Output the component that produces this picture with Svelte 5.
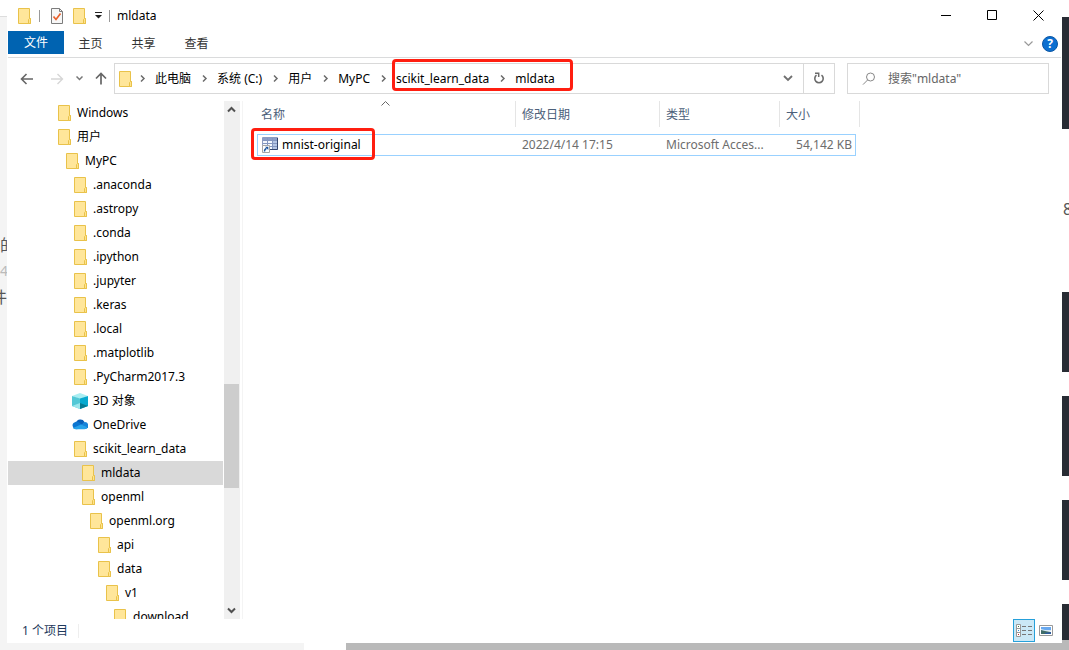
<script lang="ts">
  type IconKind = 'folder' | 'cube' | 'cloud';

  interface TreeItem {
    name: string;
    level: number;
    icon?: IconKind;
  }

  const tree: TreeItem[] = [
    { name: 'Windows', level: 0 },
    { name: '用户', level: 0 },
    { name: 'MyPC', level: 1 },
    { name: '.anaconda', level: 2 },
    { name: '.astropy', level: 2 },
    { name: '.conda', level: 2 },
    { name: '.ipython', level: 2 },
    { name: '.jupyter', level: 2 },
    { name: '.keras', level: 2 },
    { name: '.local', level: 2 },
    { name: '.matplotlib', level: 2 },
    { name: '.PyCharm2017.3', level: 2 },
    { name: '3D 对象', level: 2, icon: 'cube' },
    { name: 'OneDrive', level: 2, icon: 'cloud' },
    { name: 'scikit_learn_data', level: 2 },
    { name: 'mldata', level: 3 },
    { name: 'openml', level: 3 },
    { name: 'openml.org', level: 4 },
    { name: 'api', level: 5 },
    { name: 'data', level: 5 },
    { name: 'v1', level: 6 },
    { name: 'download', level: 7 },
  ];

  const tabs = ['主页', '共享', '查看'];
  const path = ['此电脑', '系统 (C:)', '用户', 'MyPC'];
  const marked = ['scikit_learn_data', 'mldata'];

  let selected = $state('mldata');
  let query = $state('');
</script>

{#snippet folder()}
  <svg class="icon" width="16" height="16" viewBox="0 0 16 16" aria-hidden="true">
    <path d="M2.500 .5h11v10h1v5h-12z" fill="#ffe69a" stroke="#e9c24a" />
    <path d="M12.500 15.500v-4l1-1h1v5z" fill="#ffe38c" stroke="#e9c24a" />
  </svg>
{/snippet}

{#snippet chevron()}
  <svg class="sep" width="26" height="9" viewBox="0 0 26 9" aria-hidden="true">
    <path d="M12 1.500l3 3-3 3" fill="none" stroke="#6b6b6b" stroke-width="1.500" />
  </svg>
{/snippet}

<div class="desktop">
  <div class="behind-left">
    <div class="behind-text">
      <span>的</span>
      <span class="dim">40</span>
      <span class="end">件</span>
    </div>
  </div>

  <main class="window">
    <header class="titlebar">
      <div class="quick">
        {@render folder()}
        <i class="bar first"></i>
        <button class="plain" aria-label="属性">
          <svg class="icon" width="16" height="16" viewBox="0 0 16 16" aria-hidden="true">
            <path d="M2.500 .5h8l3 3v12h-11z" fill="#f7f7f7" stroke="#7c7c7c" />
            <path d="M10.500 .5v3h3" fill="none" stroke="#7c7c7c" />
            <path d="M4.500 8.500l2.500 3 4.500-6" fill="none" stroke="#e8602c" stroke-width="1.700" />
          </svg>
        </button>
        <button class="plain new" aria-label="新建文件夹">{@render folder()}</button>
        <button class="plain more" aria-label="自定义快速访问工具栏">
          <svg width="7" height="7" viewBox="0 0 7 7" aria-hidden="true">
            <path d="M0 0h7v1H0zM0 3h7L3.500 6.500z" fill="#222" />
          </svg>
        </button>
        <i class="bar"></i>
      </div>
      <h1>mldata</h1>
      <div class="controls">
        <button aria-label="最小化">
          <svg width="11" height="11" viewBox="0 0 11 11"><path d="M0 5.500h10" stroke="#000" /></svg>
        </button>
        <button aria-label="最大化">
          <svg width="11" height="11" viewBox="0 0 11 11"><path d="M.5 .5h9v9h-9z" fill="none" stroke="#000" /></svg>
        </button>
        <button aria-label="关闭">
          <svg width="11" height="11" viewBox="0 0 11 11"><path d="M.5 .5l10 10M10.500 .5l-10 10" stroke="#000" /></svg>
        </button>
      </div>
    </header>

    <div class="ribbon">
      <button class="file">文件</button>
      {#each tabs as tab}
        <button class="tab">{tab}</button>
      {/each}
      <div class="ribbon-end">
        <button class="plain" aria-label="展开功能区">
          <svg width="9" height="6" viewBox="0 0 9 6"><path d="M.5 .5l4 4 4-4" fill="none" stroke="#999" stroke-width="1.200" /></svg>
        </button>
        <button class="help" aria-label="帮助">?</button>
      </div>
    </div>

    <div class="address-row">
      <div class="history">
        <button class="plain" aria-label="后退">
          <svg width="14" height="12" viewBox="0 0 14 12"><path d="M13 6H2M6.500 1L1.500 6l5 5" fill="none" stroke="#666" stroke-width="1.600" /></svg>
        </button>
        <button class="plain" aria-label="前进">
          <svg width="14" height="12" viewBox="0 0 14 12"><path d="M1 6h11M7.500 1l5 5-5 5" fill="none" stroke="#d6d6d6" stroke-width="1.400" /></svg>
        </button>
        <button class="plain" aria-label="最近浏览的位置">
          <svg width="7" height="5" viewBox="0 0 7 5"><path d="M.5 .5l3 3 3-3" fill="none" stroke="#777" stroke-width="1.500" /></svg>
        </button>
        <button class="plain" aria-label="上移">
          <svg width="12" height="13" viewBox="0 0 12 13"><path d="M6 12.500V2M1 6.500l5-5 5 5" fill="none" stroke="#666" stroke-width="1.700" /></svg>
        </button>
      </div>
      <div class="address">
        <nav class="crumbs" aria-label="路径">
          {@render folder()}
          {#each path as part}
            {@render chevron()}
            <a href="#{part}">{part}</a>
          {/each}
          {@render chevron()}
          <span class="marked">
            <a href="#{marked[0]}">{marked[0]}</a>
            {@render chevron()}
            <a href="#{marked[1]}">{marked[1]}</a>
          </span>
        </nav>
        <button class="plain drop" aria-label="以前的位置">
          <svg width="10" height="7" viewBox="0 0 10 7"><path d="M1 1l4 4 4-4" fill="none" stroke="#707070" stroke-width="1.800" /></svg>
        </button>
        <button class="plain refresh" aria-label="刷新">
          <svg width="12" height="13" viewBox="0 0 12 13">
            <path d="M8.500 3.200A4.200 4.200 0 1 1 3.500 3.200" fill="none" stroke="#6b6b6b" stroke-width="1.600" />
            <path d="M2 1.300h3.700V5" fill="none" stroke="#6b6b6b" stroke-width="1.500" />
          </svg>
        </button>
      </div>
      <label class="search">
        <svg width="14" height="14" viewBox="0 0 14 14" aria-hidden="true">
          <circle cx="8.500" cy="5" r="4" fill="none" stroke="#888" />
          <path d="M5.700 7.900L1 12.600" stroke="#888" />
        </svg>
        <input type="text" placeholder={'搜索"mldata"'} aria-label="搜索" bind:value={query} />
      </label>
    </div>

    <div class="body">
      <nav class="tree" aria-label="导航窗格">
        <ul>
          {#each tree as item}
            <li>
              <button
                class="node"
                class:selected={item.name === selected}
                style="padding-left: {48 + item.level * 8}px"
                onclick={() => (selected = item.name)}
              >
                {#if item.icon === 'cube'}
                  <svg class="icon" width="16" height="16" viewBox="0 0 16 16" aria-hidden="true">
                    <path d="M0 3l8-3 8 3-8 3z" fill="#a9eef2" />
                    <path d="M0 3l8 2.500V16l-8-3z" fill="#52c8d6" />
                    <path d="M16 3L8 5.500V16l8-3z" fill="#06a9cf" />
                    <path d="M0 13l8-3v6z" fill="#9be6ec" />
                    <path d="M16 13l-8-3v6z" fill="#067a92" />
                  </svg>
                {:else if item.icon === 'cloud'}
                  <svg class="icon" width="16" height="16" viewBox="0 0 16 16" aria-hidden="true">
                    <path d="M4 6a4.600 4.600 0 0 1 8.500-1l-3 4z" fill="#0a5fb8" />
                    <path d="M3.500 12A3.500 3.500 0 0 1 3 5.200c2-.8 4 0 5 1l4 3-7 3z" fill="#0c76d1" />
                    <path d="M12.500 5A3.500 3.500 0 0 1 13 12L9 8z" fill="#1683d9" />
                    <path d="M3.500 12.200c-1.200 0-2-.5-2.500-1.200L9 7.500l6.300 2.800c-.6 1.200-1.400 1.900-2.800 1.900z" fill="#28a3ea" />
                  </svg>
                {:else}
                  {@render folder()}
                {/if}
                <span>{item.name}</span>
              </button>
            </li>
          {/each}
        </ul>
      </nav>

      <div class="scrollbar">
        <button class="plain" aria-label="向上滚动">
          <svg width="9" height="7" viewBox="0 0 9 7"><path d="M1 5.500L4.500 2 8 5.500" fill="none" stroke="#505050" stroke-width="2" /></svg>
        </button>
        <i class="before"></i>
        <i class="thumb"></i>
        <i class="after"></i>
        <button class="plain" aria-label="向下滚动">
          <svg width="9" height="7" viewBox="0 0 9 7"><path d="M1 1.500L4.500 5 8 1.500" fill="none" stroke="#505050" stroke-width="2" /></svg>
        </button>
      </div>

      <section class="files">
        <table>
          <colgroup>
            <col class="c-name" />
            <col class="c-date" />
            <col class="c-type" />
            <col class="c-size" />
          </colgroup>
          <thead>
            <tr>
              <th>
                <div>
                  名称
                  <svg class="sorted" width="9" height="5" viewBox="0 0 9 5" aria-hidden="true"><path d="M.5 4.500l4-4 4 4" fill="none" stroke="#666" /></svg>
                </div>
              </th>
              <th><div>修改日期</div></th>
              <th><div>类型</div></th>
              <th><div>大小</div></th>
            </tr>
          </thead>
          <tbody>
            <tr>
              <td>
                <div class="file-name">
                  <svg class="icon" width="16" height="16" viewBox="0 0 16 16" aria-hidden="true">
                    <path d="M.5 .5h15v12H.5z" fill="#f3f7fd" stroke="#8d9dc2" />
                    <path d="M1 1h14v2H1z" fill="#8b9dc8" />
                    <path d="M11 3h4v9h-4z" fill="#b4c5e5" />
                    <path d="M1 3.500h14M1 6.500h14M1 9.500h14M5.500 1v11M10.500 1v11" stroke="#8496bf" />
                    <path d="M15.500 1v11.500H8" fill="none" stroke="#34466f" />
                    <path d="M.5 8.500h7v7h-7z" fill="#fff" stroke="#a5a5a5" />
                    <path d="M2.500 14.500c0-2 .6-2.700 2-3" fill="none" stroke="#1c559e" stroke-width="1.400" />
                    <path d="M3 9.800h3.300v3.300z" fill="#1c559e" />
                  </svg>
                  <span>mnist-original</span>
                </div>
              </td>
              <td>2022/4/14 17:15</td>
              <td>Microsoft Acces...</td>
              <td class="size">54,142 KB</td>
            </tr>
          </tbody>
        </table>
      </section>
    </div>

    <footer class="status">
      <span class="count">1 个项目</span>
      <div class="views">
        <button class="view active" aria-label="详细信息">
          <svg width="16" height="14" viewBox="0 0 16 14">
            <path d="M.5 .5h4v12h-4zM.5 4.500h4M.5 8.500h4" fill="#fff" stroke="#999" />
            <path d="M2 2h1v1H2z" fill="#3c7a3c" />
            <path d="M2 6h1v1H2z" fill="#2a8ad4" />
            <path d="M2 10h1v1H2z" fill="#c22" />
            <path d="M6 2.500h4M12 2.500h4M6 6.500h4M12 6.500h4M6 10.500h4M12 10.500h4" stroke="#777" />
          </svg>
        </button>
        <button class="view" aria-label="大缩略图">
          <svg width="14" height="11" viewBox="0 0 14 11">
            <path d="M.5 .5h13v10H.5z" fill="#fff" stroke="#999" />
            <path d="M2 2h10v3H2z" fill="#68a8ef" />
            <path d="M2 4l4 1 6 0v1H2z" fill="#d5e8f5" />
            <path d="M2 5l4 1 6 1v2H2z" fill="#3f6c69" />
            <path d="M6 8l6-1v2H6z" fill="#2e5c9e" />
          </svg>
        </button>
      </div>
    </footer>
  </main>

  <div class="behind-right">
    <i class="block b1"></i>
    <span class="digit">8</span>
    <i class="block b2"></i>
    <i class="block b3"></i>
    <i class="block b4"></i>
    <i class="block b5"></i>
  </div>
  <div class="behind-bottom"><i></i></div>
</div>

<style>
  :global(body) {
    background: #fff;
  }
  .desktop {
    display: grid;
    grid-template-columns: 7px minmax(0, 1fr) 7px;
    grid-template-rows: minmax(0, 1fr) 7px;
    height: 100vh;
    overflow: hidden;
    font-family: 'Noto Sans', 'Noto Sans CJK SC', sans-serif;
    font-size: 12px;
    line-height: 16px;
    color: #000;
  }
  button,
  input {
    font: inherit;
    color: inherit;
    margin: 0;
    padding: 0;
    border: 0;
    background: none;
  }
  a {
    color: inherit;
    text-decoration: none;
    white-space: nowrap;
  }
  svg {
    display: block;
    flex: none;
  }
  .plain {
    display: flex;
    align-items: center;
    justify-content: center;
  }

  /* page showing around the window */
  .behind-left {
    margin-top: 16px;
    border-top: 1px solid #ddd;
    background: #f4f4f4;
    overflow: hidden;
  }
  .behind-text {
    display: flex;
    flex-direction: column;
    padding-top: 215px;
    font-size: 16px;
    line-height: 26px;
    color: #555;
  }
  .behind-text .dim {
    font-size: 14px;
    color: #bbb;
  }
  .behind-text .end {
    align-self: flex-end;
  }
  .behind-right {
    display: flex;
    flex-direction: column;
    padding-top: 17px;
    overflow: hidden;
  }
  .block {
    flex: none;
    height: 80px;
    margin-bottom: 24px;
    background: #282c34;
  }
  .b1 {
    height: 112px;
    margin-bottom: 0;
  }
  .b5 {
    height: 36px;
    margin-bottom: 0;
    border-bottom: 3px solid #b9b9b9;
  }
  .digit {
    flex: none;
    height: 163px;
    box-sizing: border-box;
    padding: 68px 0 0 1px;
    font-size: 16px;
    line-height: 24px;
    color: #555;
  }
  .behind-bottom {
    grid-column: 1 / -1;
    display: flex;
    background: linear-gradient(to right, #f4f4f4 304px, #fff 304px);
  }
  .behind-bottom i {
    flex: 1;
    margin-left: 346px;
    background: #b9b9b9;
  }

  .window {
    display: flex;
    flex-direction: column;
    padding: 0 1px;
    background: #fff;
    min-width: 0;
  }

  .titlebar {
    display: flex;
    height: 31px;
  }
  .quick {
    display: flex;
    align-items: center;
    padding-left: 8px;
  }
  .bar {
    width: 1px;
    height: 12px;
    background: #999;
  }
  .bar.first {
    margin: 0 9px 0 7px;
  }
  .new {
    margin-left: 6px;
  }
  .more {
    width: 22px;
  }
  h1 {
    margin: 0;
    padding-left: 7px;
    font-size: 12px;
    font-weight: 400;
    line-height: 31px;
  }
  .controls {
    display: flex;
    margin-left: auto;
  }
  .controls button {
    display: flex;
    align-items: center;
    justify-content: center;
    width: 46px;
  }

  .ribbon {
    display: flex;
    height: 26px;
    border-bottom: 1px solid #dadbdc;
    color: #333;
  }
  .ribbon .file {
    width: 56px;
    height: 23px;
    padding-top: 1px;
    background: #0063b1;
    color: #fff;
  }
  .tab {
    width: 53px;
    height: 25px;
  }
  .ribbon-end {
    display: flex;
    align-items: center;
    gap: 9px;
    margin-left: auto;
    padding-right: 3px;
  }
  .help {
    width: 16px;
    height: 16px;
    border: 1px solid #0b56a4;
    border-radius: 50%;
    background: #0c6fd0;
    color: #fff;
    font-weight: 700;
    line-height: 14px;
  }

  .address-row {
    display: flex;
    align-items: center;
    height: 41px;
    padding-right: 12px;
  }
  .history {
    display: flex;
    align-items: center;
    justify-content: space-between;
    box-sizing: border-box;
    width: 106px;
    padding: 0 7px 0 12px;
  }
  .history .plain:nth-child(2) {
    margin-left: 4px;
  }
  .address {
    display: flex;
    flex: 1;
    box-sizing: border-box;
    height: 31px;
    border: 1px solid #d9d9d9;
    min-width: 0;
  }
  .crumbs {
    display: flex;
    align-items: center;
    flex: 1;
    padding-left: 2px;
  }
  .crumbs > .icon {
    margin-right: -4px;
  }
  .marked {
    position: relative;
    display: flex;
    align-items: center;
  }
  .marked::after,
  .file-name::after {
    content: '';
    position: absolute;
    border: 3px solid #ff1e10;
    border-radius: 4px;
    pointer-events: none;
  }
  .marked::after {
    inset: -12px -18px -4px -4px;
  }
  .drop {
    width: 30px;
  }
  .refresh {
    width: 31px;
    border-left: 1px solid #d9d9d9;
  }
  .search {
    display: flex;
    align-items: center;
    box-sizing: border-box;
    width: 202px;
    height: 31px;
    margin-left: 12px;
    padding-left: 14px;
    border: 1px solid #d9d9d9;
  }
  .search input {
    flex: 1;
    min-width: 0;
    margin-left: 12px;
    outline: none;
  }
  .search input::placeholder {
    color: #666;
    opacity: 1;
  }

  .body {
    display: flex;
    flex: 1;
    min-height: 0;
    padding-top: 2px;
  }
  .tree {
    width: 215px;
    overflow: hidden;
  }
  ul {
    margin: 0;
    padding: 0;
    list-style: none;
  }
  .node {
    display: flex;
    align-items: center;
    gap: 5px;
    width: 100%;
    height: 24px;
    text-align: left;
    white-space: nowrap;
  }
  .node.selected {
    background: #d9d9d9;
  }
  .scrollbar {
    display: flex;
    flex-direction: column;
    width: 16px;
    margin: 0 2px 0 1px;
    background: #f0f0f0;
  }
  .scrollbar .plain {
    height: 17px;
    padding-right: 1px;
  }
  .before {
    flex: 266;
  }
  .thumb {
    flex: 104;
    margin-right: 1px;
    background: #cdcdcd;
  }
  .after {
    flex: 114;
  }

  .files {
    flex: 1;
    min-width: 0;
    padding-left: 14px;
    border-left: 1px solid #f4f4f4;
  }
  table {
    width: 599px;
    table-layout: fixed;
    border-collapse: separate;
    border-spacing: 0;
  }
  .c-name {
    width: 259px;
  }
  .c-date {
    width: 144px;
  }
  .c-type {
    width: 120px;
  }
  th {
    padding: 0 0 7px;
    font-weight: 400;
    text-align: left;
    color: #4c607a;
  }
  th div {
    position: relative;
    height: 26px;
    padding-left: 6px;
    border-right: 1px solid #e5e5e5;
    line-height: 28px;
  }
  th:first-child div {
    padding-left: 4px;
  }
  th:last-child div {
    margin-right: -4px;
  }
  .sorted {
    position: absolute;
    top: 0;
    left: 48%;
  }
  td {
    box-sizing: border-box;
    height: 22px;
    padding: 0 0 0 6px;
    border: solid #99d1ff;
    border-width: 1px 0;
    color: #6d6d6d;
    white-space: nowrap;
  }
  td:first-child {
    border-left-width: 1px;
    padding-left: 4px;
    color: #000;
  }
  td.size {
    border-right-width: 1px;
    padding-right: 3px;
    text-align: right;
  }
  .file-name {
    position: relative;
    display: inline-flex;
    align-items: center;
    gap: 4px;
    vertical-align: middle;
  }
  .file-name::after {
    inset: -9px -14px -7px -11px;
  }

  .status {
    display: flex;
    height: 24px;
    color: #1e395b;
  }
  .count {
    height: 14px;
    margin-top: 5px;
    padding: 0 10px 0 14px;
    border-right: 1px solid #eee;
    line-height: 14px;
  }
  .views {
    display: flex;
    gap: 1px;
    margin-left: auto;
    padding-right: 5px;
  }
  .view {
    display: flex;
    align-items: center;
    justify-content: center;
    box-sizing: border-box;
    width: 20px;
    height: 23px;
  }
  .view.active {
    width: 22px;
    border: 1px solid #26a0da;
    background: #cbe8f6;
  }
</style>
